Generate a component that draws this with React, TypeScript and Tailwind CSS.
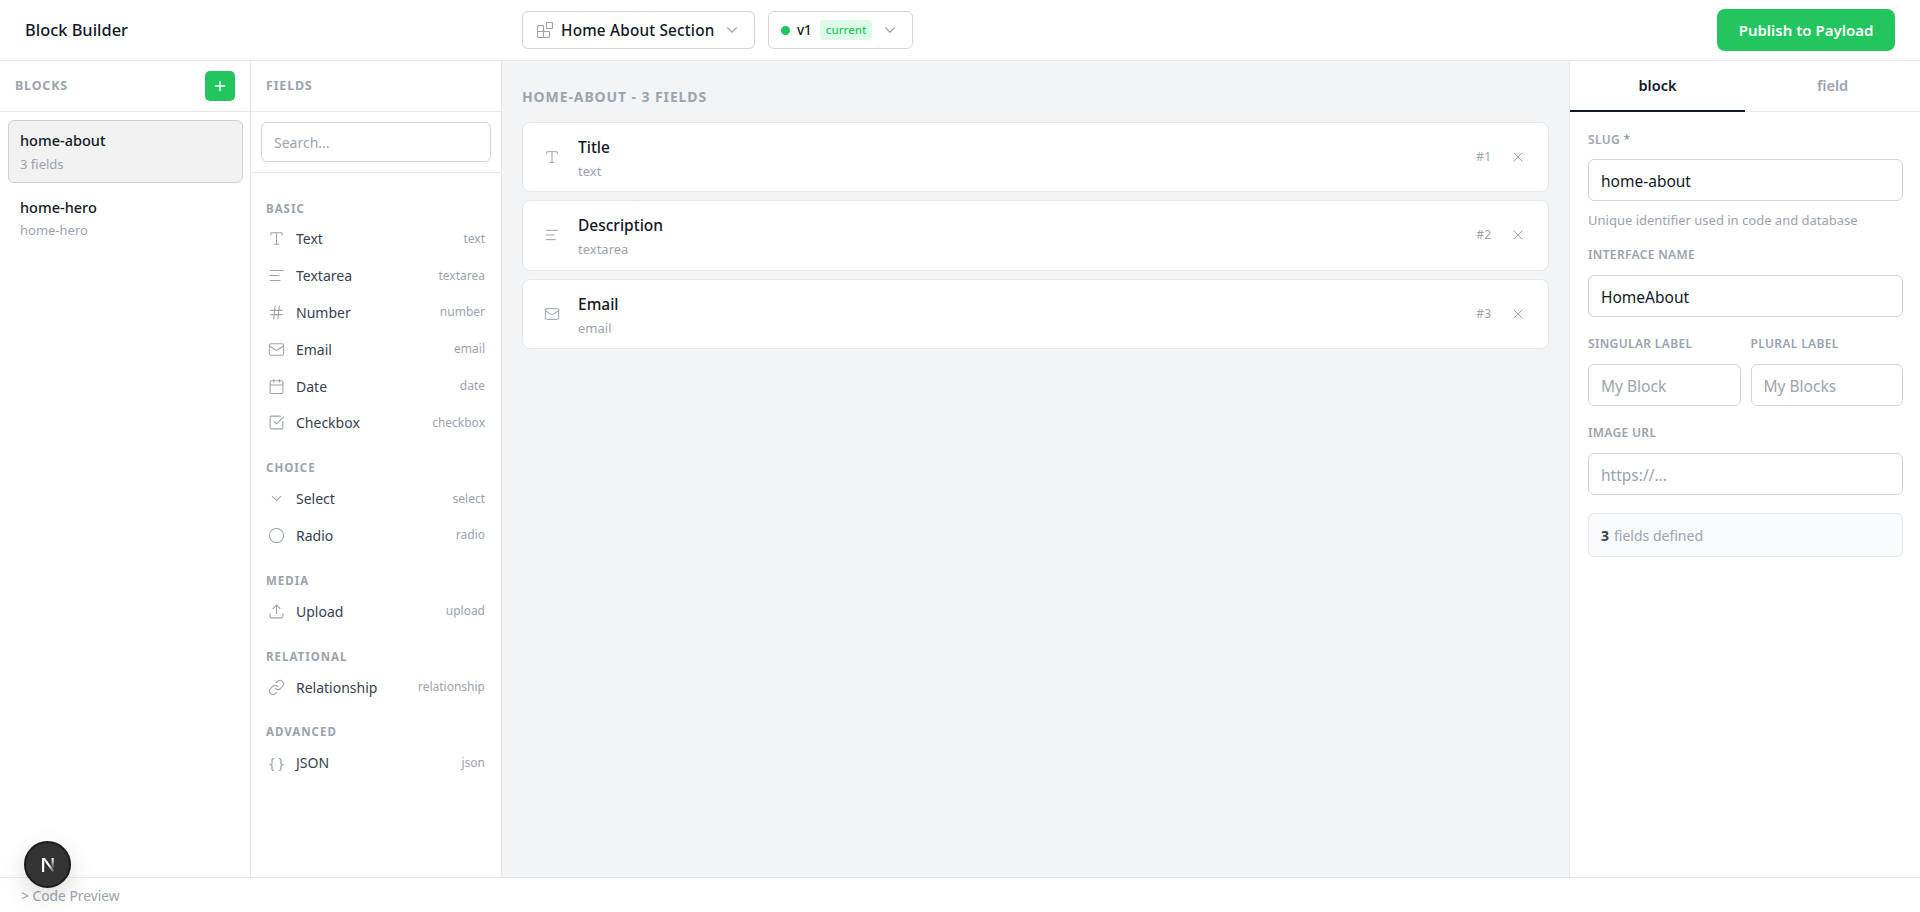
import { useState } from "react";
import {
  AlignLeft,
  Blocks,
  Calendar,
  ChevronDown,
  Circle,
  Hash,
  Link,
  Mail,
  Plus,
  SquareCheckBig,
  Type,
  Upload,
  X,
} from "lucide-react";

const groups = [
  {
    name: "BASIC",
    items: [
      { label: "Text", type: "text", icon: Type },
      { label: "Textarea", type: "textarea", icon: AlignLeft },
      { label: "Number", type: "number", icon: Hash },
      { label: "Email", type: "email", icon: Mail },
      { label: "Date", type: "date", icon: Calendar },
      { label: "Checkbox", type: "checkbox", icon: SquareCheckBig },
    ],
  },
  {
    name: "CHOICE",
    items: [
      { label: "Select", type: "select", icon: ChevronDown },
      { label: "Radio", type: "radio", icon: Circle },
    ],
  },
  { name: "MEDIA", items: [{ label: "Upload", type: "upload", icon: Upload }] },
  { name: "RELATIONAL", items: [{ label: "Relationship", type: "relationship", icon: Link }] },
  { name: "ADVANCED", items: [{ label: "JSON", type: "json", icon: null }] },
];

const fields = [
  { title: "Title", type: "text", icon: Type },
  { title: "Description", type: "textarea", icon: AlignLeft },
  { title: "Email", type: "email", icon: Mail },
];

function Label({ children }: { children: React.ReactNode }) {
  return <div className="mb-[9.5px] h-[20px] text-[12px] leading-[20px] font-semibold tracking-[0.35px] text-[#9ca3af]">{children}</div>;
}

function TextInput({ value, placeholder }: { value?: string; placeholder?: string }) {
  const [val, setVal] = useState(value ?? "");
  return (
    <input
      value={val}
      placeholder={placeholder}
      onChange={(e) => setVal(e.target.value)}
      className="h-[42.5px] w-full rounded-[6px] border border-[#d1d5db] bg-white px-[12px] pt-[2px] text-[15.5px] text-[#111827] outline-none placeholder:text-[#9ca3af]"
    />
  );
}

export default function App() {
  const [tab, setTab] = useState("block");

  return (
    <div className="relative flex h-screen w-full flex-col overflow-hidden bg-white font-['Noto_Sans',sans-serif] text-[#111827]">
      {/* top bar */}
      <header className="flex h-[61px] shrink-0 items-center border-b border-[#e5e7eb] pr-[25px] pl-[25px]">
        <div className="w-[497px] text-[16.4px] font-medium">Block Builder</div>
        <div className="flex h-[38px] w-[233px] items-center rounded-[6px] border border-[#d1d5db] pr-[13px] pl-[13px]">
          <Blocks size={18} strokeWidth={1.5} className="text-[#9ca3af]" />
          <span className="ml-[7px] text-[15.3px] font-medium tracking-[0.2px]">Home About Section</span>
          <ChevronDown size={18} strokeWidth={1.5} className="ml-auto text-[#9ca3af]" />
        </div>
        <div className="ml-[13px] flex h-[38px] w-[145px] items-center rounded-[6px] border border-[#d1d5db] pr-[13px] pl-[12px]">
          <span className="h-[9px] w-[9px] rounded-full bg-[#22c55e]" />
          <span className="ml-[7px] text-[13.5px] font-medium">v1</span>
          <span className="ml-[8px] rounded-[3px] bg-[#dcfce7] px-[6px] text-[11.5px] leading-[20px] font-medium text-[#22c55e]">current</span>
          <ChevronDown size={18} strokeWidth={1.5} className="ml-auto text-[#9ca3af]" />
        </div>
        <button className="ml-auto h-[42px] w-[178px] rounded-[8px] bg-[#22c55e] text-[15px] font-semibold text-white">
          Publish to Payload
        </button>
      </header>

      <main className="flex min-h-0 flex-1">
        {/* blocks */}
        <aside className="w-[251px] shrink-0 border-r border-[#e5e7eb]">
          <div className="flex h-[51px] items-center justify-between border-b border-[#e5e7eb] pr-[15px] pl-[15px]">
            <span className="text-[12.5px] font-bold tracking-[0.8px] text-[#9ca3af]">BLOCKS</span>
            <button className="flex h-[30px] w-[30px] items-center justify-center rounded-[5px] bg-[#22c55e] text-white">
              <Plus size={16} strokeWidth={2} />
            </button>
          </div>
          <div className="py-[8px] pr-[7px] pl-[8px]">
            <div className="h-[63px] rounded-[6px] border border-[#d0d0d0] bg-[#f2f2f2] pt-[8px] pl-[11px]">
              <div className="text-[14.5px] leading-[22px] font-medium">home-about</div>
              <div className="mt-[3px] text-[13px] leading-[20px] text-[#9ca3af]">3 fields</div>
            </div>
            <div className="h-[63px] pt-[13px] pl-[12px]">
              <div className="text-[14.5px] leading-[22px] font-medium">home-hero</div>
              <div className="mt-[2px] text-[13px] leading-[20px] text-[#9ca3af]">home-hero</div>
            </div>
          </div>
        </aside>

        {/* field palette */}
        <aside className="w-[251px] shrink-0 border-r border-[#e5e7eb]">
          <div className="flex h-[51px] items-center border-b border-[#e5e7eb] pl-[15px]">
            <span className="text-[12.5px] font-bold tracking-[0.8px] text-[#9ca3af]">FIELDS</span>
          </div>
          <div className="border-b border-[#e5e7eb] p-[10px]">
            <input
              placeholder="Search..."
              className="h-[40px] w-full rounded-[6px] border border-[#d1d5db] bg-white px-[12px] text-[14px] outline-none placeholder:text-[#9ca3af]"
            />
          </div>
          <div className="px-[15px] pt-[25.5px]">
            {groups.map((g) => (
              <div key={g.name} className="mb-[17px]">
                <div className="mb-[2px] h-[20px] text-[11.5px] leading-[20px] font-bold tracking-[1px] text-[#9ca3af]">{g.name}</div>
                {g.items.map((item) => (
                  <div key={item.label} className="flex h-[36.8px] items-center pr-[1px] pl-[2px]">
                    <span className="flex w-[17px] items-center justify-center text-[#9ca3af]">
                      {item.icon ? (
                        <item.icon size={17} strokeWidth={1.5} className="shrink-0" />
                      ) : (
                        <span className="text-[14px] whitespace-nowrap">{"{ }"}</span>
                      )}
                    </span>
                    <span className="ml-[11px] text-[14px] text-[#374151]">{item.label}</span>
                    <span className="ml-auto text-[12px] text-[#9ca3af]">{item.type}</span>
                  </div>
                ))}
              </div>
            ))}
          </div>
        </aside>

        {/* canvas */}
        <section className="min-w-0 flex-1 bg-[#f3f4f6] px-[20px] pt-[26px]">
          <div className="mb-[15px] h-[20px] text-[14px] leading-[20px] font-bold tracking-[0.9px] text-[#9ca3af]">HOME-ABOUT - 3 FIELDS</div>
          <div className="flex flex-col gap-[8px]">
            {fields.map((f, i) => (
              <div key={f.title} className="flex h-[70.3px] items-center rounded-[8px] border border-[#e5e7eb] bg-white pr-[22px] pl-[21px]">
                <f.icon size={16} strokeWidth={1.5} className="text-[#9ca3af]" />
                <div className="ml-[18px] pt-[2px]">
                  <div className="text-[15.5px] leading-[24px] font-medium">{f.title}</div>
                  <div className="mt-[2px] text-[13px] leading-[20px] text-[#9ca3af]">{f.type}</div>
                </div>
                <span className="ml-auto text-[12px] text-[#9ca3af]">#{i + 1}</span>
                <X size={16} strokeWidth={1.5} className="ml-[19px] text-[#9ca3af]" />
              </div>
            ))}
          </div>
        </section>

        {/* inspector */}
        <aside className="w-[351px] shrink-0 border-l border-[#e5e7eb]">
          <div className="flex h-[51px] border-b border-[#e5e7eb]">
            {["block", "field"].map((t) => (
              <button
                key={t}
                onClick={() => setTab(t)}
                className={`-mb-px h-[51px] flex-1 border-b-2 text-[14.5px] font-semibold ${
                  tab === t ? "border-[#111827] text-[#111827]" : "border-transparent text-[#9ca3af]"
                }`}
              >
                {t}
              </button>
            ))}
          </div>
          <div className="pt-[18px] pr-[17px] pl-[18px]">
            <div className="[&>div:first-child]:mb-[8.5px]">
              <Label>SLUG *</Label>
              <TextInput value="home-about" />
            </div>
            <div className="mt-[9px] mb-[15px] text-[13px] leading-[20px] text-[#9ca3af]">Unique identifier used in code and database</div>
            <Label>INTERFACE NAME</Label>
            <TextInput value="HomeAbout" />
            <div className="mt-[17px] flex gap-[10px]">
              <div className="min-w-0 flex-1">
                <Label>SINGULAR LABEL</Label>
                <TextInput placeholder="My Block" />
              </div>
              <div className="min-w-0 flex-1">
                <Label>PLURAL LABEL</Label>
                <TextInput placeholder="My Blocks" />
              </div>
            </div>
            <div className="mt-[17px]">
              <Label>IMAGE URL</Label>
              <TextInput placeholder="https://..." />
            </div>
            <div className="mt-[18px] flex h-[44px] items-center rounded-[6px] border border-[#e5e7eb] bg-[#f9fafb] px-[12px] text-[14px] text-[#9ca3af]">
              <span className="mr-[5px] font-bold text-[#374151]">3</span>fields defined
            </div>
          </div>
        </aside>
      </main>

      <footer className="flex h-[35px] shrink-0 items-center border-t border-[#e5e7eb] bg-white pt-[3px] pl-[21px] text-[13.8px] text-[#9ca3af]">
        &gt; Code Preview
      </footer>

      {/* next dev indicator */}
      <div className="absolute top-[841px] left-[24px] flex h-[47px] w-[47px] items-center justify-center rounded-full border-2 border-[#1a1a1a] bg-[#333333] shadow-[0_8px_24px_rgba(0,0,0,0.15)]">
        <svg width="20" height="20" viewBox="0 0 20 20" fill="none">
          <defs>
            <linearGradient id="nFade" x1="5" y1="3" x2="16" y2="17" gradientUnits="userSpaceOnUse">
              <stop offset="0.5" stopColor="white" />
              <stop offset="1" stopColor="white" stopOpacity="0.1" />
            </linearGradient>
            <linearGradient id="nStem" x1="14.5" y1="3" x2="14.5" y2="13" gradientUnits="userSpaceOnUse">
              <stop stopColor="white" />
              <stop offset="1" stopColor="white" stopOpacity="0.1" />
            </linearGradient>
          </defs>
          <path d="M4 3h2.2v14H4z" fill="white" />
          <path d="M4.5 3h2.4L16.5 16l-2 1.2z" fill="url(#nFade)" />
          <path d="M13.6 3h2.2v10h-2.2z" fill="url(#nStem)" />
        </svg>
      </div>
    </div>
  );
}
